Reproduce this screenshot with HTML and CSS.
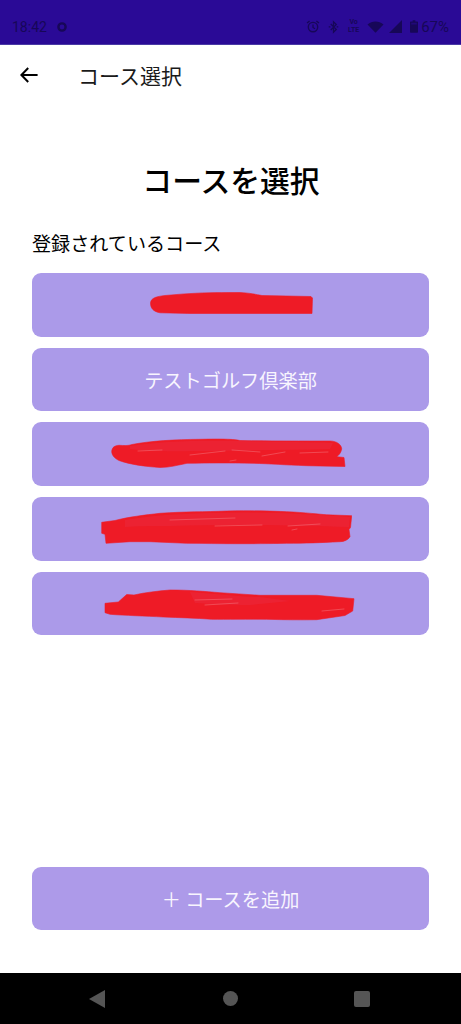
FILE: index.html
```html
<!DOCTYPE html>
<html lang="ja">
<head>
<meta charset="utf-8">
<title>コース選択</title>
<link rel="stylesheet" href="styles.css">
</head>
<body>
<div class="screen">
  <header class="status">
    <div class="status-left">
      <span class="time">18:42</span>
      <svg class="gear" viewBox="0 0 12 12"><circle cx="6" cy="6" r="3.600" fill="none" stroke="currentColor" stroke-width="2.400"/></svg>
    </div>
    <div class="status-right">
      <svg class="ic-alarm" viewBox="0 0 14 14"><circle cx="7" cy="7.600" r="4.700" fill="none" stroke="currentColor" stroke-width="1.400"/><path d="M7 5v3l2 1.200M1 3.600 3.600 1.400M13 3.600 10.400 1.400" fill="none" stroke="currentColor" stroke-width="1.300"/></svg>
      <svg class="ic-bt" viewBox="0 0 12 14"><path d="M3 3.800 9 9.600 6 12.600V1.400L9 4.400 3 10.200" fill="none" stroke="currentColor" stroke-width="1.400"/><path d="M.8 6.900h1.800M9.400 6.900h1.800" stroke="currentColor" stroke-width="1.400"/></svg>
      <span class="volte"><span>Vo</span><span>LTE</span></span>
      <svg class="ic-wifi" viewBox="0 0 16 12"><path d="M0 3.400C4.400-.6 11.600-.6 16 3.400L8 11.800Z" fill="currentColor"/></svg>
      <svg class="ic-signal" viewBox="0 0 13 13"><path d="M13 0V13H0Z" fill="currentColor"/></svg>
      <svg class="ic-batt" viewBox="0 0 9 14"><path d="M3 0h3v1.400h2.200c.5 0 .8.300.8.800V13.200c0 .5-.3.800-.8.800H.8c-.5 0-.8-.3-.8-.8V2.200c0-.5.300-.8.800-.8H3Z" fill="currentColor"/><rect x="1.400" y="2.800" width="6.200" height="2" fill="#2a0a96" opacity=".55"/></svg>
      <span class="pct">67%</span>
    </div>
  </header>

  <nav class="appbar">
    <svg class="back" viewBox="0 0 18 16"><path d="M8.200 1 1.400 8l6.800 7M1.600 8H17.600" fill="none" stroke="currentColor" stroke-width="2"/></svg>
    <span class="appbar-title">コース選択</span>
  </nav>

  <main class="content">
    <h1 class="title">コースを選択</h1>
    <p class="label">登録されているコース</p>
    <div class="list">
      <button class="course">
        <svg class="scribble" viewBox="32 273 397 63.500"><path class="ink" d="M150.500 303C151 298 156 296.500 165 295.500C190 293 215 292 240 292.500C250 293 256 294.500 262 295.500L311 296.500L312.500 298L312 313.500L240 313.500L190 313.500L160 312.800C153 311.500 150.500 308 150.500 303Z"/></svg>
      </button>
      <button class="course">テストゴルフ倶楽部</button>
      <button class="course">
        <svg class="scribble" viewBox="32 422 397 63.500"><path class="ink" d="M111.700 451.700C112 447 115 445.500 119 445.300C124 445.500 128 446 132 444.500C150 441 175 439.500 200 439.300C215 439 232 438.700 240 440.500C270 441 305 441 330 441C337 441 341.700 445 341.700 449C341 453 338.500 455.500 336.700 456.700L344 457.500L345 466.500L320 466L306.700 465.700C285 465 270 463.700 253 463.300C230 462.700 205 463 187 463.300C178 465 170 467.500 160 467.500C145 466.500 130 464.500 119 460.500C114 458 112 455 111.700 451.700Z"/><path class="band" d="M130 446C160 441 200 440 240 441C270 442 310 442 333 443L330 449C290 450 250 450 215 451C180 451 150 452 130 449Z"/><path class="glint" d="M138 451 162 450M190 455 225 451M232 450 260 452M262 456 285 452M300 453 328 452M230 461 236 460"/></svg>
      </button>
      <button class="course">
        <svg class="scribble" viewBox="32 497 397 63.500"><path class="ink" d="M101.700 522.300L115 520.500C128 517 145 515 160 513.300C185 511.500 205 512 226.700 511C250 510.500 270 511 286.700 511.700C305 512.500 320 514.300 326.700 514.800L351.700 515.700L350.500 527.500L349 529.500L350 536.700C348 540 344 541.700 340 541.700C320 542.700 305 543.300 286.700 543.300C250 544 220 543.700 186.700 543.300L150 541.700L130 541.700L106 543.300L105 534.300L101.700 533.300Z"/><path class="band" d="M125 520C160 514 200 513 240 512.500C280 512.500 320 515 350 517L349 527C300 525 230 524 170 526C150 526 135 526 125 527Z"/><path class="glint" d="M170 520 235 518M215 526 262 525M288 526 320 524M292 530 297 529"/></svg>
      </button>
      <button class="course">
        <svg class="scribble" viewBox="32 571 397 63.500"><path class="ink" d="M105 602.300L118.300 601L126.700 593.500L134 594C145 591.500 158 590 170 589C190 589 205 590.500 220 591.700L260 594.300L316.700 594.300L354 597.700L352.700 610L345 614.500L316.700 618.700C300 619 285 618.800 266.700 618.300C250 618 225 618.500 211.700 618.300C195 617 180 616.700 163.300 616C145 615 125 614.500 110 613.300L105 611.700Z"/><path class="band" d="M190 591C210 592 240 596 260 596L290 600L250 604C230 604 210 603 195 602Z"/><path class="glint" d="M195 599 232 598M205 604 238 602M322 610 344 608"/></svg>
      </button>
    </div>
    <button class="course add"><span class="plus">＋</span> コースを追加</button>
  </main>

  <footer class="navbar">
    <svg class="nav-back" viewBox="0 0 16 18"><path d="M16 0V18L0 9Z" fill="currentColor"/></svg>
    <span class="nav-home"></span>
    <span class="nav-recent"></span>
  </footer>
</div>
</body>
</html>
```

FILE: styles.css
```css
* { box-sizing: border-box; }
html, body { margin: 0; padding: 0; background: #fff; }
body { font-family: "Noto Sans CJK JP", "Noto Sans", sans-serif; color: #000; }
.screen { width: 461px; height: 1024px; display: flex; flex-direction: column; overflow: hidden; }

.status { height: 45px; flex: none; background: #2a0a96; border-bottom: 1px solid #4a3aa5; color: #170758; display: flex; align-items: center; justify-content: space-between; padding: 9px 12px 0 12px; font-family: Roboto, sans-serif; }
.status-left { display: flex; align-items: center; gap: 9px; }
.time { font-size: 14px; }
.gear { width: 12px; height: 12px; }
.status-right { display: flex; align-items: center; }
.ic-alarm { width: 14px; height: 15px; margin-right: 8px; }
.ic-bt { width: 11px; height: 14px; margin-right: 8px; }
.volte { display: flex; flex-direction: column; width: 13px; font-size: 7px; line-height: 7.500px; font-weight: 700; margin-right: 7px; align-items: center; }
.ic-wifi { width: 17px; height: 12px; margin-right: 5px; }
.ic-signal { width: 13px; height: 13px; margin-right: 8px; }
.ic-batt { width: 8px; height: 15px; margin-right: 3px; }
.pct { font-size: 15px; }

.appbar { height: 60px; flex: none; display: flex; align-items: center; padding: 0 0 0 20px; }
.back { width: 18px; height: 16px; margin-right: 41px; margin-top: -1px; color: #000; }
.appbar-title { font-size: 21px; line-height: 1; color: #1a1a1a; margin-left: -1px; }

.content { flex: 1; display: flex; flex-direction: column; padding: 0 32px 43px; }
.title { margin: 53px 0 0; padding-left: 1px; font-size: 29.800px; line-height: 42px; font-weight: 500; text-align: center; }
.label { margin: 29px 0 0; font-size: 19.100px; line-height: 28px; }
.list { margin-top: 16px; display: flex; flex-direction: column; gap: 11.200px; }
.course { position: relative; width: 100%; height: 63.500px; flex: none; padding: 1px 0 0; border: 0; border-radius: 9px; background: #ab9ae9; color: #f8f5fe; font-family: inherit; font-size: 19.200px; text-align: center; }
.add { margin-top: auto; background: #ad9ae9; font-size: 19.200px; }
.plus { font-size: 19.200px; }
.scribble { position: absolute; inset: 0; width: 100%; height: 100%; filter: blur(.45px); }
.ink { fill: #ee1b26; stroke: #ee1b26; stroke-width: .6; stroke-linejoin: round; }
.band { fill: #e8304a; opacity: .35; }
.glint { fill: none; stroke: #f4808a; stroke-width: 1; stroke-linecap: round; opacity: .45; }

.navbar { height: 51px; flex: none; background: #000; color: #555; display: flex; align-items: center; padding-left: 89px; }
.nav-back { width: 16px; height: 18px; margin-right: 118px; }
.nav-home { width: 15px; height: 15px; border-radius: 50%; background: #555; margin-right: 116px; }
.nav-recent { width: 16px; height: 16px; border-radius: 2px; background: #555; }
```
